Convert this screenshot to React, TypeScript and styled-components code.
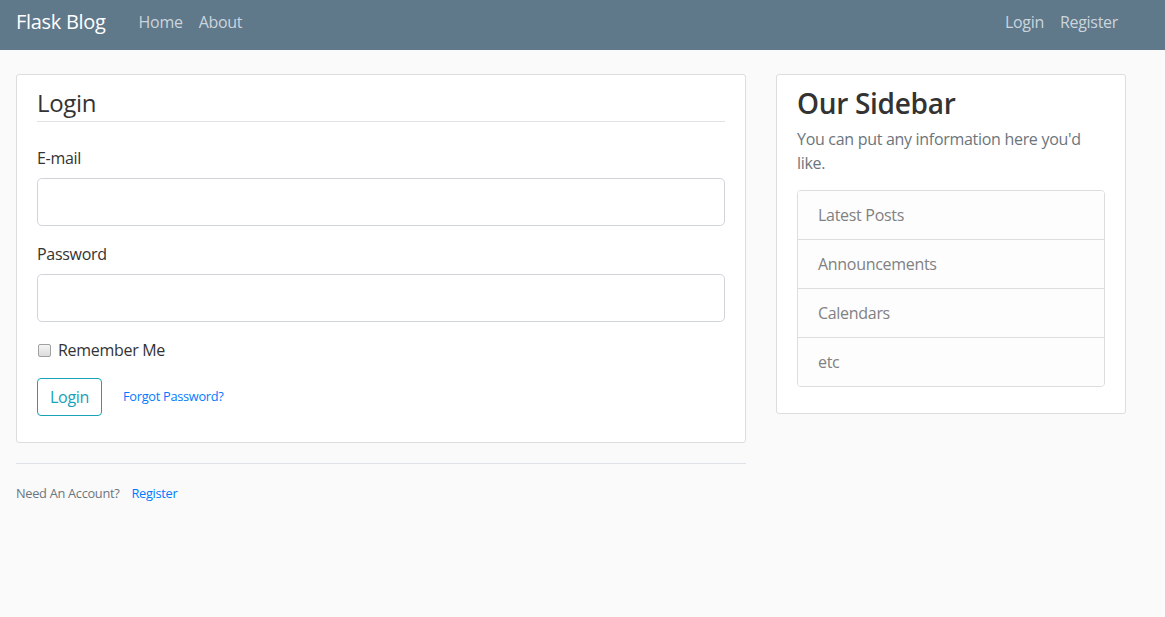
import React from "react";
import styled, { createGlobalStyle } from "styled-components";

const GlobalStyle = createGlobalStyle`
  * { box-sizing: border-box; }
  html, body { margin: 0; padding: 0; }
  body {
    background: #fafafa;
    color: #333333;
    font-family: "Open Sans", "Noto Sans", "Liberation Sans", sans-serif;
    font-size: 16px;
    line-height: 1.5;
    letter-spacing: -0.3px;
  }
  a { text-decoration: none; }
`;

const Header = styled.header`
  background: #5f788a;
  height: 50px;
`;

const NavInner = styled.nav`
  width: 1140px;
  margin-left: 1px;
  padding: 7px 15px 0;
  height: 100%;
  display: flex;
  align-items: flex-start;
`;

const Brand = styled.a`
  color: #fff;
  font-size: 20px;
  line-height: 30px;
  margin-right: 25px;
`;

const NavGroup = styled.div<{ $right?: boolean }>`
  display: flex;
  margin-left: ${(p) => (p.$right ? "auto" : "0")};
`;

const NavLink = styled.a`
  color: #cbd5dd;
  padding: 3px 8px;
  line-height: 24px;
  font-size: 16px;
`;

const Main = styled.main`
  width: 1140px;
  margin: 24px 0 0 1px;
  padding: 0 15px;
  display: grid;
  grid-template-columns: 730px 350px;
  column-gap: 30px;
  align-items: start;
`;

const Section = styled.div`
  background: #fff;
  padding: 10px 20px;
  border: 1px solid #dddddd;
  border-radius: 3px;
  margin-bottom: 20px;
`;

const Legend = styled.div`
  font-size: 24px;
  line-height: 36px;
  border-bottom: 1px solid #dee2e6;
  margin-bottom: 24px;
  color: #333;
`;

const FormGroup = styled.div`
  margin-bottom: 16px;
  display: flex;
  flex-direction: column;
`;

const Label = styled.label`
  margin-bottom: 8px;
  line-height: 24px;
`;

const Input = styled.input`
  height: 48px;
  width: 100%;
  border: 1px solid #ced4da;
  border-radius: 4.8px;
  font-size: 20px;
  padding: 8px 16px;
  font-family: inherit;
  background: #fff;
`;

const CheckRow = styled.label`
  display: flex;
  align-items: center;
  height: 24px;
`;

const Check = styled.input`
  appearance: none;
  width: 13px;
  height: 13px;
  margin: 0 7px 0 1px;
  border: 1px solid #a0a0a0;
  border-radius: 2px;
  background: linear-gradient(#f4f4f4, #dcdcdc);
`;

const ButtonRow = styled.div`
  display: flex;
  align-items: center;
  margin-bottom: 16px;
`;

const OutlineButton = styled.button`
  height: 38px;
  padding: 6px 12px;
  font-size: 16px;
  font-family: inherit;
  letter-spacing: inherit;
  line-height: 24px;
  color: #17a2b8;
  background: transparent;
  border: 1px solid #17a2b8;
  border-radius: 4px;
`;

const SmallLink = styled.a<{ $gap: number }>`
  font-size: 12.8px;
  color: #007bff;
  margin-left: ${(p) => p.$gap}px;
`;

const Footer = styled.div`
  border-top: 1px solid #dee2e6;
  padding-top: 16px;
  font-size: 12.8px;
  color: #6c757d;
  line-height: 26px;
`;

const SideTitle = styled.h3`
  font-size: 28px;
  font-weight: 600;
  line-height: 1.2;
  margin: 2px 0 6px;
  color: #333;
`;

const Muted = styled.p`
  color: #6c757d;
  margin: 0 0 15px;
`;

const ListGroup = styled.ul`
  list-style: none;
  padding: 0;
  margin: 0 0 16px;
  border: 1px solid #dddddd;
  border-radius: 4px;
  overflow: hidden;
`;

const ListItem = styled.li`
  background: #fdfdfe;
  color: #818182;
  padding: 12px 20px;
  line-height: 24px;
  & + & { border-top: 1px solid #dddddd; }
`;

export default function App() {
  return (
    <>
      <GlobalStyle />
      <Header>
        <NavInner>
          <Brand href="#">Flask Blog</Brand>
          <NavGroup>
            <NavLink href="#">Home</NavLink>
            <NavLink href="#">About</NavLink>
          </NavGroup>
          <NavGroup $right>
            <NavLink href="#">Login</NavLink>
            <NavLink href="#">Register</NavLink>
          </NavGroup>
        </NavInner>
      </Header>
      <Main>
        <div>
          <Section>
            <form onSubmit={(e) => e.preventDefault()}>
              <Legend>Login</Legend>
              <FormGroup>
                <Label>E-mail</Label>
                <Input type="text" />
              </FormGroup>
              <FormGroup>
                <Label>Password</Label>
                <Input type="password" />
              </FormGroup>
              <FormGroup>
                <CheckRow>
                  <Check type="checkbox" />
                  Remember Me
                </CheckRow>
              </FormGroup>
              <ButtonRow>
                <OutlineButton type="submit">Login</OutlineButton>
                <SmallLink href="#" $gap={21}>Forgot Password?</SmallLink>
              </ButtonRow>
            </form>
          </Section>
          <Footer>
            Need An Account?
            <SmallLink href="#" $gap={12}>Register</SmallLink>
          </Footer>
        </div>
        <Section>
          <SideTitle>Our Sidebar</SideTitle>
          <Muted>You can put any information here you'd like.</Muted>
          <ListGroup>
            <ListItem>Latest Posts</ListItem>
            <ListItem>Announcements</ListItem>
            <ListItem>Calendars</ListItem>
            <ListItem>etc</ListItem>
          </ListGroup>
        </Section>
      </Main>
    </>
  );
}
